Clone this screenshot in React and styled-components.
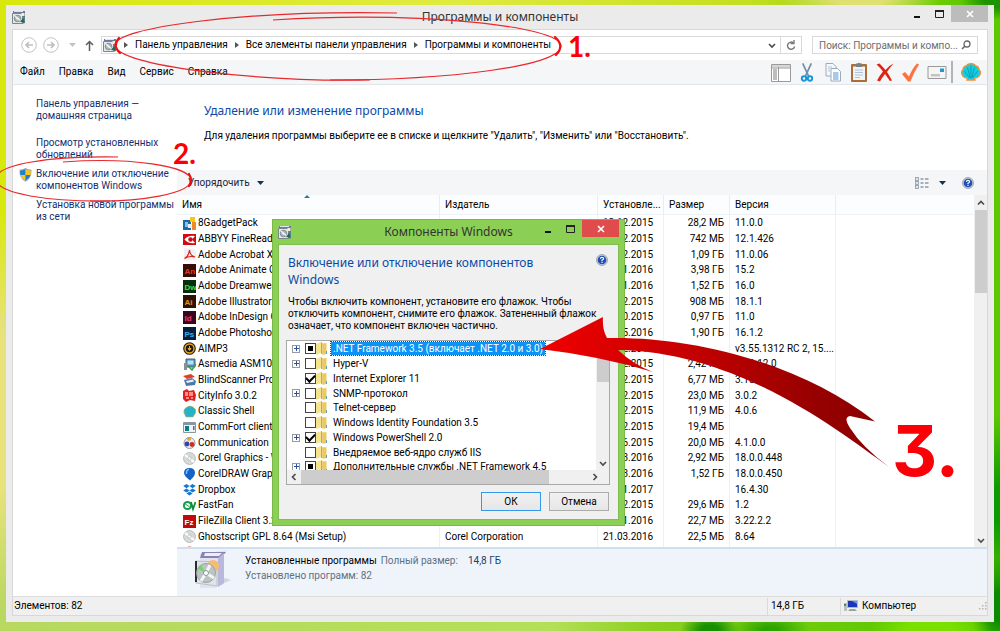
import React from "react";
import styled, { createGlobalStyle, css } from "styled-components";

const Global = createGlobalStyle`
  * { box-sizing: border-box; }
  html, body, #root { height: 100%; }
  body {
    margin: 0;
    overflow: hidden;
    font: 10px/12px Roboto, "Noto Sans", sans-serif;
    color: #000;
  }
  button, input { font: inherit; color: inherit; margin: 0; padding: 0; }
  a { color: inherit; text-decoration: none; }
  h1, h2, p { margin: 0; font-weight: 400; }
  svg { display: block; flex: none; }
`;

/* ---------- desktop and window ---------- */

const Desktop = styled.div`
  position: relative;
  height: 100vh;
  min-height: 480px;
  padding: 5px 6px 9px;
  display: flex;
  background:
    radial-gradient(ellipse 60px 30px at 93% 100%, #7be000 40%, transparent),
    radial-gradient(ellipse 30px 50px at 100% 96%, #0a8a00 30%, transparent),
    radial-gradient(ellipse 40px 20px at 77% 100%, #2ca400 20%, transparent),
    radial-gradient(ellipse 30px 20px at 71% 100%, #169000 30%, transparent),
    radial-gradient(ellipse 40px 90px at 100% 80%, #0c9a00 20%, transparent),
    radial-gradient(ellipse 40px 20px at 100% 0, #1c9400 40%, transparent),
    radial-gradient(ellipse 80px 20px at 86% 0, #e0e070 30%, transparent),
    radial-gradient(ellipse 30px 200px at 0 65%, #e8e27a 40%, transparent),
    linear-gradient(90deg, #d8e80c 0, #e0ea40 45%, #c4de20 75%, #5cc800 97%) top / 100% 50% no-repeat,
    linear-gradient(90deg, #b8d860 0, #b4e058 55%, #8cd020 65%, #5cc800 90%);
`;

const Window = styled.main`
  flex: 1;
  min-width: 0;
  display: flex;
  flex-direction: column;
  background: #ebebeb;
  padding: 0 6px 6px;
`;

const TitleBar = styled.header`
  flex: none;
  height: 24px;
  display: grid;
  grid-template-columns: 88px 1fr 88px;
  align-items: center;
`;

const Title = styled.h1`
  font: 12px/16px "Noto Sans", "Open Sans", sans-serif;
  color: #333;
  text-align: center;
  white-space: nowrap;
`;

const WindowButtons = styled.div`
  display: flex;
  justify-content: flex-end;
  align-self: start;
`;

const WindowButton = styled.button`
  width: 23px;
  height: 17px;
  border: 0;
  background: none;
  display: grid;
  place-items: center;
`;

const CloseButton = styled(WindowButton)`
  width: 37px;
  background: ${(p) => p.$color};
`;

const Client = styled.div`
  flex: 1;
  min-height: 0;
  display: flex;
  flex-direction: column;
  background: #fff;
  border: 1px solid #d8d8d8;
`;

/* ---------- navigation ---------- */

const NavRow = styled.nav`
  flex: none;
  height: 30px;
  padding: 0 9px 0 6px;
  display: flex;
  align-items: center;
`;

const IconButton = styled.button`
  border: 0;
  background: none;
  display: grid;
  place-items: center;
  width: ${(p) => p.$w || 24}px;
  height: ${(p) => p.$h || 18}px;
`;

const AddressBox = styled.div`
  flex: 1;
  height: 18px;
  margin: 0 10px 0 3px;
  border: 1px solid #d9d9d9;
  display: flex;
  align-items: center;
  padding-left: 1px;
`;

const Crumbs = styled.div`
  flex: 1;
  display: flex;
  align-items: center;
  gap: 7px;
  padding-left: 7px;
  white-space: nowrap;
`;

const RefreshCell = styled.div`
  height: 100%;
  border-left: 1px solid #d9d9d9;
`;

const SearchBox = styled.label`
  width: 166px;
  height: 18px;
  border: 1px solid #d9d9d9;
  display: flex;
  align-items: center;
  padding: 0 6px;
`;

const SearchInput = styled.input`
  flex: 1;
  min-width: 0;
  border: 0;
  outline: 0;
  height: 14px;
  background: none;
  text-overflow: ellipsis;
  &::placeholder { color: #6d6d6d; opacity: 1; }
`;

const MenuRow = styled.div`
  flex: none;
  height: 25px;
  padding: 0 6px 0 7px;
  display: flex;
  align-items: center;
  justify-content: space-between;
  background: #f4f6f8;
  border-bottom: 1px solid #e3e6ea;
`;

const Menus = styled.div`
  display: flex;
  gap: 14px;
`;

const MenuButton = styled.button`
  border: 0;
  background: none;
  height: 18px;
`;

const Tools = styled.div`
  display: flex;
  align-items: center;
  gap: 6px;
`;

const ToolDivider = styled.span`
  width: 2px;
  height: 22px;
  margin: 0 2px 0 -2px;
  background: #b4b4b4;
`;

/* ---------- body ---------- */

const Body = styled.div`
  flex: 1;
  min-height: 0;
  display: flex;
`;

const Sidebar = styled.aside`
  width: 164px;
  flex: none;
  padding: 13px 0 0 6px;
  display: flex;
  flex-direction: column;
  gap: 7px;
  color: #142f6e;
`;

const SideLink = styled.a`
  display: grid;
  grid-template-columns: 12px 1fr;
  column-gap: 5px;
  white-space: nowrap;
  margin-top: ${(p) => (p.$spaced ? 8 : 0)}px;
`;

const Content = styled.section`
  flex: 1;
  min-width: 0;
  display: flex;
  flex-direction: column;
`;

const Intro = styled.div`
  flex: none;
  height: 85px;
  padding: 17px 27px 0;
`;

const Heading = styled.h2`
  font: 12px/17px "Noto Sans", "Open Sans", sans-serif;
  color: #0a4aa6;
`;

const IntroText = styled.p`
  margin-top: 11px;
`;

const CommandBar = styled.div`
  flex: none;
  height: 25px;
  padding: 0 7px 0 11px;
  display: flex;
  align-items: center;
  justify-content: space-between;
  background: #f4f6f8;
  color: #14243c;
`;

const OrganizeButton = styled.button`
  border: 0;
  background: none;
  display: flex;
  align-items: center;
  gap: 7px;
  color: inherit;
`;

const CommandIcons = styled.div`
  display: flex;
  align-items: center;
  gap: 10px;
`;

const ListArea = styled.div`
  flex: 1;
  min-height: 0;
  display: flex;
  overflow: hidden;
`;

const ListViewport = styled.div`
  flex: 1;
  min-width: 0;
  overflow: hidden;
`;

const ProgramTable = styled.table`
  width: 100%;
  table-layout: fixed;
  border-collapse: separate;
  border-spacing: 0;
`;

const HeadCell = styled.th`
  height: 20px;
  width: ${(p) => p.$w};
  padding: 0 0 0 5px;
  font-weight: 400;
  text-align: left;
  white-space: nowrap;
  background: #fcfdfe;
  border-right: 1px solid #e4eef8;
  border-bottom: 1px solid #edf3f9;
  &:last-child { border-right: 0; }
`;

const Row = styled.tr`
  height: 16px;
  &:nth-child(3n) { height: 15px; }
`;

const Cell = styled.td`
  padding: 0 5px;
  line-height: 14px;
  white-space: nowrap;
  border-right: 1px solid #e9f2fa;
  text-align: ${(p) => (p.$right ? "right" : "left")};
  &:last-child { border-right: 0; }
`;

const ProgramName = styled.span`
  display: flex;
  align-items: center;
  gap: 2px;
  height: 15px;
  padding-left: 1px;
`;

const ScrollTrack = styled.div`
  flex: none;
  width: 13px;
  display: flex;
  flex-direction: column;
  align-items: center;
  justify-content: space-between;
  background: #f0f0f0;
`;

const ScrollThumb = styled.div`
  width: 12px;
  height: ${(p) => p.$h};
  background: #cdcdcd;
  margin-bottom: auto;
`;

const Details = styled.div`
  flex: none;
  height: 49px;
  padding: 0 18px;
  display: flex;
  gap: 14px;
  background: #eff4fb;
  border-top: 2px solid #d0dfee;
`;

const DetailsText = styled.div`
  padding-top: 6px;
  display: flex;
  flex-direction: column;
  gap: 3px;
  color: #5d6f84;
`;

const DetailsLine = styled.div`
  display: flex;
  gap: 4px;
`;

const Strong = styled.span`
  color: #000;
`;

const SizeValue = styled.span`
  margin-left: 6px;
  color: #1f4066;
`;

const StatusBar = styled.footer`
  flex: none;
  height: 19px;
  display: flex;
  align-items: center;
  background: #f0f0f0;
  border-top: 1px solid #dcdcdc;
`;

const StatusCell = styled.div`
  height: 17px;
  display: flex;
  align-items: center;
  gap: 4px;
  ${(p) =>
    p.$w
      ? css`
          width: ${p.$w}px;
          border-left: 1px solid #dadada;
          padding-left: 3px;
        `
      : css`
          flex: 1;
          padding-left: 1px;
        `}
`;

/* ---------- dialog ---------- */

const Dialog = styled.section`
  position: absolute;
  left: 272px;
  top: 219px;
  width: 353px;
  padding: 0 5px 5px;
  background: #8ccf55;
  border: 1px solid #79b94a;
`;

const DialogBody = styled.div`
  background: #f0f0f0;
  border: 1px solid #7fbf4f;
  padding: 9px 8px 8px 7px;
`;

const DialogTop = styled.div`
  display: flex;
  justify-content: space-between;
  padding: 0 2px;
`;

const DialogHeading = styled(Heading)`
  width: 270px;
`;

const DialogText = styled.p`
  padding: 8px 0 8px 2px;
  white-space: nowrap;
`;

const TreeBox = styled.div`
  height: 145px;
  border: 1px solid #a9a9a9;
  background: #fff;
  display: flex;
  flex-direction: column;
`;

const TreeTop = styled.div`
  flex: 1;
  min-height: 0;
  display: flex;
`;

const Tree = styled.ul`
  flex: 1;
  margin: 0;
  padding: 0 0 0 5px;
  list-style: none;
  overflow: hidden;
`;

const TreeItem = styled.li`
  height: 15px;
  display: grid;
  grid-template-columns: 13px 11px 15px auto;
  justify-content: start;
  align-items: center;
  &:nth-child(4n) { height: 14px; }
`;

const Expander = styled.button`
  width: 8px;
  height: 8px;
  border: 1px solid #9a9a9a;
  background: #fff;
  display: grid;
  place-items: center;
  visibility: ${(p) => (p.$shown ? "visible" : "hidden")};
`;

const Check = styled.input`
  appearance: none;
  width: 11px;
  height: 11px;
  border: 1px solid #444;
  background: #fff;
  background-image: ${(p) =>
    p.$partial ? "linear-gradient(#000, #000)" : "none"};
  background-size: 5px 5px;
  background-position: center;
  background-repeat: no-repeat;
  display: grid;
  place-items: center;
  &:checked::before {
    content: "";
    width: 7px;
    height: 4px;
    border-left: 2px solid #000;
    border-bottom: 2px solid #000;
    transform: rotate(-45deg) translate(1px, -1px);
  }
`;

const TreeLabel = styled.label`
  padding: 0 2px;
  line-height: 13px;
  white-space: nowrap;
  ${(p) =>
    p.$selected &&
    css`
      background: #0b93f5;
      color: #fff;
      outline: 1px dotted #6a3c10;
    `}
`;

const HScroll = styled.div`
  flex: none;
  height: 14px;
  display: flex;
  background: #f0f0f0;
`;

const HThumb = styled.div`
  flex: 1;
  margin-right: 32px;
  background: #cdcdcd;
`;

const DialogActions = styled.div`
  display: flex;
  justify-content: flex-end;
  gap: 8px;
  padding: 7px 1px 0 0;
`;

const PushButton = styled.button`
  width: 60px;
  height: 19px;
  background: linear-gradient(#f1f1f1, #e6e6e6);
  border: 1px solid ${(p) => (p.$default ? "#3399ee" : "#acacac")};
`;

/* ---------- hand-drawn marks ---------- */

const Marks = styled.svg`
  position: absolute;
  left: 0;
  top: 0;
  pointer-events: none;
`;

const StepNumber = styled.span`
  position: absolute;
  left: ${(p) => p.$x}px;
  top: ${(p) => p.$y}px;
  color: #fb0007;
  font: 700 ${(p) => p.$size}px/1 ${(p) => p.$font}, sans-serif;
  font-feature-settings: "cv09";
  pointer-events: none;
`;

/* ---------- icons ---------- */

const ProgramsIcon = () => (
  <svg width="14" height="14" viewBox="0 0 14 14">
    <path d="M1 1h12v3H1z" fill="#6c7aa4" />
    <path d="M2 1.500h9" stroke="#dfe4f0" />
    <path d="M10 3h3v10l-3 1z" fill="#5d7f86" />
    <path d="M.5 3.500h10v10H.5z" fill="#e4e8e8" stroke="#7a868c" />
    <circle cx="5.500" cy="8.500" r="3.300" fill="#aab6b4" stroke="#74848a" strokeWidth=".8" />
    <path d="M5.500 8.500L3 6M5.500 8.500l3 2" stroke="#eef2f2" strokeWidth="1.400" />
    <circle cx="5.500" cy="8.500" r="1" fill="#fff" />
    <path d="M9.500 3h3v3h-3z" fill="#f3ead0" />
    <path d="M8 12l3-4 1.500 4.500z" fill="#1c6a50" />
  </svg>
);

const Chevron = ({ dir = "down", color = "#4a4a4a", w = 8 }) => {
  const d = { down: "M1 3l3 3 3-3", up: "M1 5.500l3-3 3 3", left: "M5.500 1l-3 3 3 3", right: "M2.500 1l3 3-3 3" }[dir];
  return (
    <svg width={w} height={w} viewBox="0 0 8 8">
      <path d={d} fill="none" stroke={color} strokeWidth="1.600" />
    </svg>
  );
};

const CrumbArrow = () => (
  <svg width="4" height="6" viewBox="0 0 4 6"><path d="M0 0l4 3-4 3z" fill="#555" /></svg>
);

const Triangle = ({ color = "#16304e" }) => (
  <svg width="7" height="4" viewBox="0 0 7 4"><path d="M0 0h7L3.500 4z" fill={color} /></svg>
);

const NavCircle = ({ flip }) => (
  <svg width="16" height="16" viewBox="0 0 16 16">
    <circle cx="8" cy="8" r="7.300" fill="none" stroke="#c3c3c3" />
    <path d={flip ? "M4 8h7M8 5l3 3-3 3" : "M12 8H5M8 5L5 8l3 3"} fill="none" stroke="#bdbdbd" strokeWidth="1.500" />
  </svg>
);

const UpArrow = () => (
  <svg width="9" height="11" viewBox="0 0 9 11">
    <path d="M4.500 11V2M1 5l3.500-3.500L8 5" fill="none" stroke="#5c5c5c" strokeWidth="1.500" />
  </svg>
);

const RefreshIcon = () => (
  <svg width="10" height="11" viewBox="0 0 10 11">
    <path d="M7.500 3A3.600 3.600 0 1 0 8.600 6.500" fill="none" stroke="#777" strokeWidth="1.400" />
    <path d="M4.500 3.500H8V0" fill="none" stroke="#777" strokeWidth="1.300" />
  </svg>
);

const SearchIcon = () => (
  <svg width="10" height="10" viewBox="0 0 10 10">
    <circle cx="6" cy="4" r="3" fill="none" stroke="#666" strokeWidth="1.300" />
    <path d="M4 6L1 9" stroke="#666" strokeWidth="1.600" />
  </svg>
);

const HelpIcon = () => (
  <svg width="12" height="12" viewBox="0 0 12 12">
    <circle cx="6" cy="6" r="5.500" fill="#c9ced6" stroke="#8c949e" strokeWidth=".7" />
    <circle cx="6" cy="6" r="4.300" fill="#1d4fb8" />
    <path d="M4.400 4.800Q4.500 3.300 6 3.300T7.600 4.700Q7.600 5.500 6 6.200V7" fill="none" stroke="#fff" strokeWidth="1.200" />
    <path d="M5.400 7.800h1.200V9H5.400z" fill="#fff" />
  </svg>
);

const MinimizeGlyph = () => (
  <svg width="8" height="10" viewBox="0 0 8 10"><path d="M1 8h6" stroke="#111" strokeWidth="2" /></svg>
);
const MaximizeGlyph = () => (
  <svg width="9" height="8" viewBox="0 0 9 8">
    <path d="M.5 1h8v6.500h-8z" fill="none" stroke="#222" />
    <path d="M0 1h9" stroke="#222" strokeWidth="2" />
  </svg>
);
const CloseGlyph = () => (
  <svg width="8" height="8" viewBox="0 0 8 8"><path d="M1 1l6 6M7 1L1 7" stroke="#fff" strokeWidth="1.600" /></svg>
);

const ShieldIcon = () => (
  <svg width="13" height="14" viewBox="0 0 13 14">
    <path d="M6.500 0Q9 1.500 12.500 1.700 13 10 6.500 13.700 0 10 .5 1.700 4 1.500 6.500 0z" fill="#9aa6b2" />
    <path d="M6.500 1.300V7H1.500Q1 4.500 1.300 2.700 4 2.600 6.500 1.300z" fill="#1e7fd6" />
    <path d="M6.500 1.300V7h5Q12 4.500 11.700 2.700 9 2.600 6.500 1.300z" fill="#fdc61a" />
    <path d="M6.500 7v5.600Q2.300 10 1.500 7z" fill="#fdc61a" />
    <path d="M6.500 7v5.600Q10.700 10 11.500 7z" fill="#1e7fd6" />
  </svg>
);

const SortMark = styled.svg`
  position: absolute;
  left: 122px;
  top: -4px;
`;

const SortHolder = styled.span`
  position: relative;
`;

const ViewIcon = () => (
  <svg width="14" height="12" viewBox="0 0 14 12">
    {[1, 5, 9].map((y) => (
      <g key={y}>
        <rect x=".5" y={y - 0.5} width="3" height="3" fill="#dfe5ea" stroke="#8b98a4" strokeWidth=".8" />
        <path d={`M5.500 ${y + 1}h3M10 ${y + 1}h3.500`} stroke="#5b6c80" />
      </g>
    ))}
  </svg>
);

const ToolIcon = ({ kind }) => {
  const art = {
    pane: (
      <g>
        <path d="M.5 2.500h19v17H.5z" fill="#fff" stroke="#9a9a9a" />
        <path d="M1 3h18v2.500H1z" fill="#d6d6d6" />
        <path d="M2 7h4v11H2z" fill="#bdbdbd" />
        <path d="M7.500 5v14M1 6h18" stroke="#9a9a9a" />
      </g>
    ),
    cut: (
      <g fill="none" strokeLinecap="round">
        <path d="M6 2l5.500 12M14 2L8.500 14" stroke="#6e8fae" strokeWidth="1.800" />
        <circle cx="7" cy="16.500" r="2.200" stroke="#1696dc" strokeWidth="1.900" />
        <circle cx="13" cy="16.500" r="2.200" stroke="#1696dc" strokeWidth="1.900" />
      </g>
    ),
    copy: (
      <g stroke="#8fa3b8" strokeWidth=".9">
        <path d="M3 1.500h7l3 3V14H3z" fill="#f6f9fc" />
        <path d="M8 6.500h6.500l3 3v9.500H8z" fill="#fff" />
        <path d="M10 11h5.500M10 13h5.500M10 15h5.500M10 17h5.500" stroke="#4b93d8" strokeWidth="1.100" />
        <path d="M5 5h4M5 7h2M5 9h2" stroke="#a9bccf" />
      </g>
    ),
    paste: (
      <g>
        <rect x="2" y="2" width="16" height="18" rx="1" fill="#a96f36" />
        <path d="M4 4.500h12v13.500H4z" fill="#eef3f8" />
        <path d="M7 1.500h1.500Q10 0 11.500 1.500H13V5H7z" fill="#777f88" />
        <path d="M6 8h8M6 10.500h8M6 13h8M6 15.500h5" stroke="#b4c4d4" />
      </g>
    ),
    remove: (
      <path d="M1.500 2.500l3-1Q8 5 10.500 8 14 3.500 18.500 1.500 14.500 6 12 10q3 4.500 5 8.500l-2 .5Q12 15 10 12q-3 3.500-5 7.500l-3-1Q5 13 8 9.500 5 5.500 1.500 2.500z" fill="#e02414" />
    ),
    apply: <path d="M1 12l3-2 4 4.500Q11.500 6 16 1.500l2 1Q13 10 9.500 19.500H7z" fill="#fb7440" />,
    mail: (
      <g>
        <path d="M1 4.500h18v12H1z" fill="#f5f5f5" stroke="#999" />
        <path d="M13 6.500h4v3.500h-4z" fill="#1c9ad6" />
        <path d="M4 12h9v2.500H4z" fill="#c4c4c4" />
      </g>
    ),
  }[kind];
  return <svg width="20" height="21" viewBox="0 0 20 21">{art}</svg>;
};

const Shell = () => (
  <svg width="20" height="18" viewBox="0 0 20 18">
    <path d="M6 17l.5-2.200Q3 15.500 1 11.500 0 8 2 6.500 2.500 3.500 5 3 7 .6 10 .6T15 3q2.500.5 3 3.500 2 1.500 1 5-2 4-5.500 3.300L14 17z" fill="#12cfe0" stroke="#ee8f3c" strokeWidth="1.300" />
    <path d="M8.500 15L3.500 8M9.200 15L6.500 4.500M10 15V2.500M10.800 15l2.700-10.500M11.500 15l5-7" stroke="#0a93b4" strokeWidth=".8" />
  </svg>
);

const Tile = ({ bg, fg, text }) => (
  <g>
    <rect width="13" height="13" fill={bg} />
    <text x="1.500" y="10" fontSize="8" fontWeight="700" fontFamily="Liberation Sans, sans-serif" fill={fg}>{text}</text>
  </g>
);

const Disc = () => (
  <g>
    <circle cx="6.500" cy="6.500" r="6" fill="#d6d9d8" stroke="#a9aeb0" strokeWidth=".7" />
    <path d="M6.500 6.500L2 3M6.500 6.500L11 10" stroke="#fff" strokeWidth="2" />
    <circle cx="6.500" cy="6.500" r="1.700" fill="#fff" stroke="#9aa0a2" strokeWidth=".6" />
  </g>
);

const appArt = {
  gadget: (
    <g>
      <path d="M0 3h8v10H0z" fill="#1769a8" /><path d="M2 5h3v5H2z" fill="#7ec4ee" />
      <path d="M7 0h5v5H7z" fill="#f7c51c" /><path d="M9 5h4v8H9z" fill="#f08c28" /><path d="M5 7h4v4H5z" fill="#e9eef2" />
    </g>
  ),
  abbyy: (
    <g><path d="M0 1h13v11H0z" fill="#d40a12" /><path d="M1.500 6.500Q5 2 12 3L9 6.500l3 3.500Q5 11 1.500 6.500z" fill="#fff" /><circle cx="7.500" cy="6.500" r="2.200" fill="#d40a12" /></g>
  ),
  acrobat: (
    <g><path d="M1 .5h9l3 3v9H1z" fill="#f4efef" /><path d="M1.500 10.500Q6 8 6.500 2 7 8 12 9 6 7.500 1.500 10.500z" fill="none" stroke="#d8231c" strokeWidth="1.200" /></g>
  ),
  an: <Tile bg="#3a0a06" fg="#e0401c" text="An" />,
  dw: <Tile bg="#06300c" fg="#3be04c" text="Dw" />,
  ai: <Tile bg="#2c1404" fg="#f08a18" text="Ai" />,
  id: <Tile bg="#35061c" fg="#e8387c" text="Id" />,
  ps: <Tile bg="#04203c" fg="#38b0f0" text="Ps" />,
  aimp: (
    <g><circle cx="6.500" cy="6.500" r="6.300" fill="#1c1a14" /><circle cx="6.500" cy="6.500" r="4.500" fill="none" stroke="#f4a81c" strokeWidth="1.400" /><path d="M6.500 4v3M5 6.500l1.500 2 1.500-2z" fill="#f4a81c" stroke="#f4a81c" /></g>
  ),
  asmedia: (
    <g><path d="M3 1h9v8H3z" fill="#4a8ed0" stroke="#566" /><path d="M4.500 2.500h6v4h-6z" fill="#b8e0f4" /><path d="M1 5h3v7H1z" fill="#8a8f94" /><path d="M5 8l4 4 4-6" stroke="#3aa048" strokeWidth="1.500" fill="none" /></g>
  ),
  scanner: (
    <g><path d="M0 2l8-2 4 3-8 2z" fill="#e04028" /><path d="M1 6l8-2 4 3-1 4-9 1z" fill="#4a78b0" /><path d="M3 7l7-1.500 1 2L4 9z" fill="#e8eef4" /></g>
  ),
  city: (
    <g><path d="M0 2l4-2 2 2 5-1 2 5-1 6-5-1-4 2-3-3z" fill="#e2201c" /><path d="M2 4h3M2 6h3M7 3v4M9 3v4M3 9h3M8 9h2" stroke="#fff" /></g>
  ),
  shell: <path d="M3 12L1 8Q0 4 4 2q3-2 6 0 4 2 2.500 6L10 12z" fill="#22b4c8" stroke="#e0a050" strokeWidth=".6" />,
  comm: (
    <g><path d="M.5 1.500h12v10H.5z" fill="#eef2f4" stroke="#8a989e" /><path d="M1 2h11v2H1z" fill="#7d98ac" /><path d="M2 5h4v5H2z" fill="#0c7f7c" /><path d="M10 5h1.500v4H10z" fill="#666" /></g>
  ),
  communication: (
    <g><circle cx="6.500" cy="7" r="5.500" fill="#e8e8ee" stroke="#99a" /><circle cx="6" cy="2.800" r="2" fill="#e8a41c" /><circle cx="4" cy="8" r="2.400" fill="#2848b0" /><circle cx="9" cy="8.500" r="2.400" fill="#d02c20" /></g>
  ),
  disc: <Disc />,
  balloon: (
    <g><path d="M6.500 0Q12 0 12 5q0 3-5 7.500Q1 8 1 5 1 0 6.500 0z" fill="#1464c8" /><path d="M6 1.500Q3 2 3.500 6" stroke="#7cc0f4" strokeWidth="1.500" fill="none" /></g>
  ),
  dropbox: (
    <path d="M3.500 1l3 2-3 2.200-3.300-2.200zM9.500 1l3.300 2-3.300 2.200-3-2.200zM3.500 5.500l3 2-3 2-3.300-2zM9.500 5.500l3.300 2-3.300 2-3-2zM6.500 8.500l3 2-3 2-3-2z" fill="#1478d4" />
  ),
  fan: (
    <g><circle cx="4.500" cy="6.500" r="3.600" fill="none" stroke="#16a04c" strokeWidth="2" /><path d="M1 4l7 5" stroke="#16a04c" /><path d="M8 3l2 7 2.500-7" stroke="#118a3c" strokeWidth="1.800" fill="none" /></g>
  ),
  filezilla: <Tile bg="#c00a0a" fg="#fff" text="Fz" />,
  opera: <circle cx="6.500" cy="6.500" r="6" fill="#e8281c" />,
};

const AppIcon = ({ kind }) => (
  <svg width="13" height="13" viewBox="0 0 13 13">{appArt[kind]}</svg>
);

const FolderIcon = () => (
  <svg width="12" height="13" viewBox="0 0 12 13">
    <path d="M0 2l5-2v11l-5 2z" fill="#f6e38e" />
    <path d="M5 0l1.500 1v11H5z" fill="#d2a63c" />
    <path d="M6.500 1.500l4-.5v11l-4 1z" fill="#ecc95e" />
    <path d="M10 9h1v3h-1z" fill="#5aa0b8" />
  </svg>
);

const SetupBoxIcon = () => (
  <svg width="36" height="40" viewBox="0 0 36 40">
    <path d="M20 38l16-7-6-2z" fill="#cfd6e0" />
    <path d="M5 5l20-3 7-1-3 4v30l-9 4H5z" fill="#e2e2f2" />
    <path d="M7 3h24L26 9H5z" fill="#8684b0" />
    <path d="M10 4h17l-3 3H9z" fill="#ecedf8" />
    <path d="M23 9l6-5v30l-6 4z" fill="#b9b8dc" />
    <path d="M1 12l21 1v24L1 34z" fill="#dfe5e6" stroke="#b8c0c8" />
    <path d="M0 12h2v21H0z" fill="#2b2b2b" />
    <circle cx="18" cy="17" r="6" fill="#f6bd72" />
    <circle cx="11" cy="24" r="9.500" fill="#bcc3c3" stroke="#9aa2a4" />
    <path d="M11 24L3 20l3-4z" fill="#6ed860" />
    <path d="M11 24l8 5M11 24l4-8M11 24L6 32" stroke="#f4f6f6" strokeWidth="3" />
    <circle cx="11" cy="24" r="2.500" fill="#fff" stroke="#8c9496" />
  </svg>
);

const ComputerIcon = () => (
  <svg width="14" height="12" viewBox="0 0 14 12">
    <path d="M0 3h3v8H0z" fill="#b8c0c4" /><path d="M0 4h2v2H0z" fill="#28a038" />
    <path d="M3 0h11v8H3z" fill="#b8bec8" /><path d="M4 1h9v6H4z" fill="#1c36b8" /><path d="M8 1h5v3z" fill="#6a90e8" />
    <path d="M6 9h5l2 2H4z" fill="#9aa2a8" />
  </svg>
);

const Grip = () => (
  <svg width="8" height="8" viewBox="0 0 8 8">
    <path d="M6 0h1.500v1.500H6zM3 3h1.500v1.500H3zM6 3h1.500v1.500H6zM0 6h1.500v1.500H0zM3 6h1.500v1.500H3zM6 6h1.500v1.500H6z" fill="#b4b4b4" />
  </svg>
);

/* ---------- data ---------- */

const programs = [
  ["gadget", "8GadgetPack", "", "12.12.2015", "28,2 МБ", "11.0.0"],
  ["abbyy", "ABBYY FineReader 12", "", "12.12.2015", "742 МБ", "12.1.426"],
  ["acrobat", "Adobe Acrobat XI Pro", "", "12.12.2015", "1,09 ГБ", "11.0.06"],
  ["an", "Adobe Animate CC", "", "21.01.2016", "3,98 ГБ", "15.2"],
  ["dw", "Adobe Dreamweaver", "", "21.01.2016", "1,52 ГБ", "16.0"],
  ["ai", "Adobe Illustrator CC", "", "12.12.2015", "908 МБ", "18.1.1"],
  ["id", "Adobe InDesign CC", "", "19.10.2015", "0,97 ГБ", "11.0"],
  ["ps", "Adobe Photoshop CC", "", "26.05.2016", "1,90 ГБ", "16.1.2"],
  ["aimp", "AIMP3", "", "12.12.2015", "", "v3.55.1312 RC 2, 15...."],
  ["asmedia", "Asmedia ASM104x USB", "", "12.12.2015", "2,42 МБ", "1.16.12.0"],
  ["scanner", "BlindScanner Pro", "", "12.12.2015", "6,77 МБ", "3.18"],
  ["city", "CityInfo 3.0.2", "", "12.12.2015", "23,0 МБ", "3.0.2"],
  ["shell", "Classic Shell", "", "12.12.2015", "11,9 МБ", "4.0.6"],
  ["comm", "CommFort client", "", "12.12.2015", "19,4 МБ", ""],
  ["communication", "Communication", "", "15.06.2015", "20,0 МБ", "4.1.0.0"],
  ["disc", "Corel Graphics - Windows", "", "21.03.2016", "2,92 МБ", "18.0.0.448"],
  ["balloon", "CorelDRAW Graphics", "", "21.03.2016", "1,52 ГБ", "18.0.0.450"],
  ["dropbox", "Dropbox", "", "21.01.2017", "", "16.4.30"],
  ["fan", "FastFan", "", "12.12.2015", "29,6 МБ", "1.2"],
  ["filezilla", "FileZilla Client 3.22.2.2", "", "21.11.2016", "22,7 МБ", "3.22.2.2"],
  ["disc", "Ghostscript GPL 8.64 (Msi Setup)", "Corel Corporation", "21.03.2016", "22,5 МБ", "8.64"],
  ["opera", "", "", "", "", ""],
];

const features = [
  [".NET Framework 3.5 (включает .NET 2.0 и 3.0)", "partial", true],
  ["Hyper-V", "", true],
  ["Internet Explorer 11", "on", false],
  ["SNMP-протокол", "", true],
  ["Telnet-сервер", "", false],
  ["Windows Identity Foundation 3.5", "", false],
  ["Windows PowerShell 2.0", "on", true],
  ["Внедряемое веб-ядро служб IIS", "", false],
  ["Дополнительные службы .NET Framework 4.5", "partial", true],
];

const WindowControls = ({ closeColor }) => (
  <WindowButtons>
    <WindowButton aria-label="Свернуть"><MinimizeGlyph /></WindowButton>
    <WindowButton aria-label="Развернуть"><MaximizeGlyph /></WindowButton>
    <CloseButton aria-label="Закрыть" $color={closeColor}><CloseGlyph /></CloseButton>
  </WindowButtons>
);

const FeaturesDialog = () => (
  <Dialog role="dialog" aria-label="Компоненты Windows">
    <TitleBar>
      <ProgramsIcon />
      <Title>Компоненты Windows</Title>
      <WindowControls closeColor="#e04b4b" />
    </TitleBar>
    <DialogBody>
      <DialogTop>
        <DialogHeading>Включение или отключение компонентов Windows</DialogHeading>
        <HelpIcon />
      </DialogTop>
      <DialogText>
        Чтобы включить компонент, установите его флажок. Чтобы<br />
        отключить компонент, снимите его флажок. Затененный флажок<br />
        означает, что компонент включен частично.
      </DialogText>
      <TreeBox>
        <TreeTop>
          <Tree>
            {features.map(([name, state, expandable], i) => (
              <TreeItem key={name}>
                <Expander $shown={expandable} aria-label="Раскрыть">
                  <svg width="5" height="5" viewBox="0 0 5 5"><path d="M0 2.500h5M2.500 0v5" stroke="#2a50a0" /></svg>
                </Expander>
                <Check type="checkbox" id={`feature-${i}`} defaultChecked={state === "on"} $partial={state === "partial"} />
                <FolderIcon />
                <TreeLabel htmlFor={`feature-${i}`} $selected={i === 0}>{name}</TreeLabel>
              </TreeItem>
            ))}
          </Tree>
          <ScrollTrack>
            <IconButton $w={13} $h={14} aria-label="Вверх"><Chevron dir="up" /></IconButton>
            <ScrollThumb $h="27px" />
            <IconButton $w={13} $h={14} aria-label="Вниз"><Chevron /></IconButton>
          </ScrollTrack>
        </TreeTop>
        <HScroll>
          <IconButton $w={14} $h={14} aria-label="Влево"><Chevron dir="left" /></IconButton>
          <HThumb />
          <IconButton $w={28} $h={14} aria-label="Вправо"><Chevron dir="right" /></IconButton>
        </HScroll>
      </TreeBox>
      <DialogActions>
        <PushButton $default>ОК</PushButton>
        <PushButton>Отмена</PushButton>
      </DialogActions>
    </DialogBody>
  </Dialog>
);

const StepMarks = () => (
  <>
    <Marks width="1000" height="631" viewBox="0 0 1000 631">
      <defs>
        <linearGradient id="arrow" x1="0" x2="1">
          <stop offset="0" stopColor="#f00000" />
          <stop offset=".4" stopColor="#c80000" />
          <stop offset=".8" stopColor="#960000" />
          <stop offset="1" stopColor="#8a0000" />
        </linearGradient>
      </defs>
      <g fill="none" stroke="#e8282c" strokeWidth="1.200">
        <path d="M397 13C240 10 115 28 115 45C115 66 260 82 370 80" />
        <path d="M273 20C420 11 561 26 561 46C561 66 450 80 330 80" />
        <path d="M118 157C50 156-4 164-4 179S50 202 110 201" />
        <path d="M63 162C130 157 191 166 191 180S140 202 90 201" />
      </g>
      <g fill="none" stroke="#ec1014" strokeWidth="2.200" strokeLinecap="round">
        <path d="M119 38Q112 46 120 53" />
        <path d="M555 37Q565 46 556 55" />
        <path d="M189 174Q193 180 189 186" />
      </g>
      <path
        d="M540 349L603 317Q602 329 607 338C690 336 800 362 875 421.600L850 416Q843 417 850 428Q862 447 889 467C840 432 740 352 618 350Q634 365 653 372Q600 356 540 349z"
        fill="url(#arrow)"
      />
    </Marks>
    <StepNumber $x={568} $y={32} $size={28} $font="Lato">1.</StepNumber>
    <StepNumber $x={173} $y={139} $size={28} $font="Lato">2.</StepNumber>
    <StepNumber $x={892} $y={416} $size={70} $font="Inter">3.</StepNumber>
  </>
);

export default function App() {
  return (
    <Desktop>
      <Global />
      <Window>
        <TitleBar>
          <ProgramsIcon />
          <Title>Программы и компоненты</Title>
          <WindowControls closeColor="#bcbcbc" />
        </TitleBar>
        <Client>
          <NavRow>
            <IconButton $w={20} aria-label="Назад"><NavCircle /></IconButton>
            <IconButton aria-label="Вперед"><NavCircle flip /></IconButton>
            <IconButton $w={18} aria-label="Журнал"><Triangle color="#c4c4c4" /></IconButton>
            <IconButton $w={17} aria-label="Вверх"><UpArrow /></IconButton>
            <AddressBox>
              <ProgramsIcon />
              <Crumbs>
                <CrumbArrow /><a href="#panel">Панель управления</a>
                <CrumbArrow /><a href="#all">Все элементы панели управления</a>
                <CrumbArrow /><a href="#programs">Программы и компоненты</a>
              </Crumbs>
              <IconButton $w={16} $h={16} aria-label="Показать адреса"><Chevron /></IconButton>
              <RefreshCell><IconButton $w={20} $h={16} aria-label="Обновить"><RefreshIcon /></IconButton></RefreshCell>
            </AddressBox>
            <SearchBox>
              <SearchInput aria-label="Поиск" placeholder="Поиск: Программы и компо..." />
              <SearchIcon />
            </SearchBox>
          </NavRow>
          <MenuRow>
            <Menus>
              {["Файл", "Правка", "Вид", "Сервис", "Справка"].map((m) => <MenuButton key={m}>{m}</MenuButton>)}
            </Menus>
            <Tools>
              {["pane", "cut", "copy", "paste", "remove", "apply", "mail"].map((k) => <ToolIcon key={k} kind={k} />)}
              <ToolDivider />
              <Shell />
            </Tools>
          </MenuRow>
          <Body>
            <Sidebar>
              <SideLink href="#home"><span /><span>Панель управления —<br />домашняя страница</span></SideLink>
              <SideLink href="#updates" $spaced><span /><span>Просмотр установленных<br />обновлений</span></SideLink>
              <SideLink href="#features"><ShieldIcon /><span>Включение или отключение<br />компонентов Windows</span></SideLink>
              <SideLink href="#network"><span /><span>Установка новой программы<br />из сети</span></SideLink>
            </Sidebar>
            <Content>
              <Intro>
                <Heading>Удаление или изменение программы</Heading>
                <IntroText>Для удаления программы выберите ее в списке и щелкните "Удалить", "Изменить" или "Восстановить".</IntroText>
              </Intro>
              <CommandBar>
                <OrganizeButton>Упорядочить <Triangle /></OrganizeButton>
                <CommandIcons>
                  <ViewIcon />
                  <Triangle />
                  <IconButton aria-label="Справка"><HelpIcon /></IconButton>
                </CommandIcons>
              </CommandBar>
              <ListArea>
                <ListViewport>
                  <ProgramTable>
                    <thead>
                      <tr>
                        <HeadCell $w="263px">
                          <SortHolder>
                            Имя
                            <SortMark width="6" height="3" viewBox="0 0 6 3"><path d="M0 3L3 0l3 3z" fill="#2a7c9c" /></SortMark>
                          </SortHolder>
                        </HeadCell>
                        <HeadCell $w="158px">Издатель</HeadCell>
                        <HeadCell $w="66px">Установле...</HeadCell>
                        <HeadCell $w="66px">Размер</HeadCell>
                        <HeadCell $w="106px">Версия</HeadCell>
                        <HeadCell $w="auto" />
                      </tr>
                    </thead>
                    <tbody>
                      {programs.map(([icon, name, publisher, date, size, version]) => (
                        <Row key={icon + name}>
                          <Cell><ProgramName><AppIcon kind={icon} />{name}</ProgramName></Cell>
                          <Cell>{publisher}</Cell>
                          <Cell>{date}</Cell>
                          <Cell $right>{size}</Cell>
                          <Cell>{version}</Cell>
                          <Cell />
                        </Row>
                      ))}
                    </tbody>
                  </ProgramTable>
                </ListViewport>
                <ScrollTrack>
                  <IconButton $w={13} $h={15} aria-label="Вверх"><Chevron dir="up" /></IconButton>
                  <ScrollThumb $h="83px" />
                  <IconButton $w={13} $h={15} aria-label="Вниз"><Chevron /></IconButton>
                </ScrollTrack>
              </ListArea>
              <Details>
                <SetupBoxIcon />
                <DetailsText>
                  <DetailsLine><Strong>Установленные программы</Strong>Полный размер:<SizeValue>14,8 ГБ</SizeValue></DetailsLine>
                  <span>Установлено программ: 82</span>
                </DetailsText>
              </Details>
            </Content>
          </Body>
          <StatusBar>
            <StatusCell>Элементов: 82</StatusCell>
            <StatusCell $w={73}>14,8 ГБ</StatusCell>
            <StatusCell $w={139}><ComputerIcon />Компьютер</StatusCell>
            <Grip />
          </StatusBar>
        </Client>
      </Window>
      <FeaturesDialog />
      <StepMarks />
    </Desktop>
  );
}
